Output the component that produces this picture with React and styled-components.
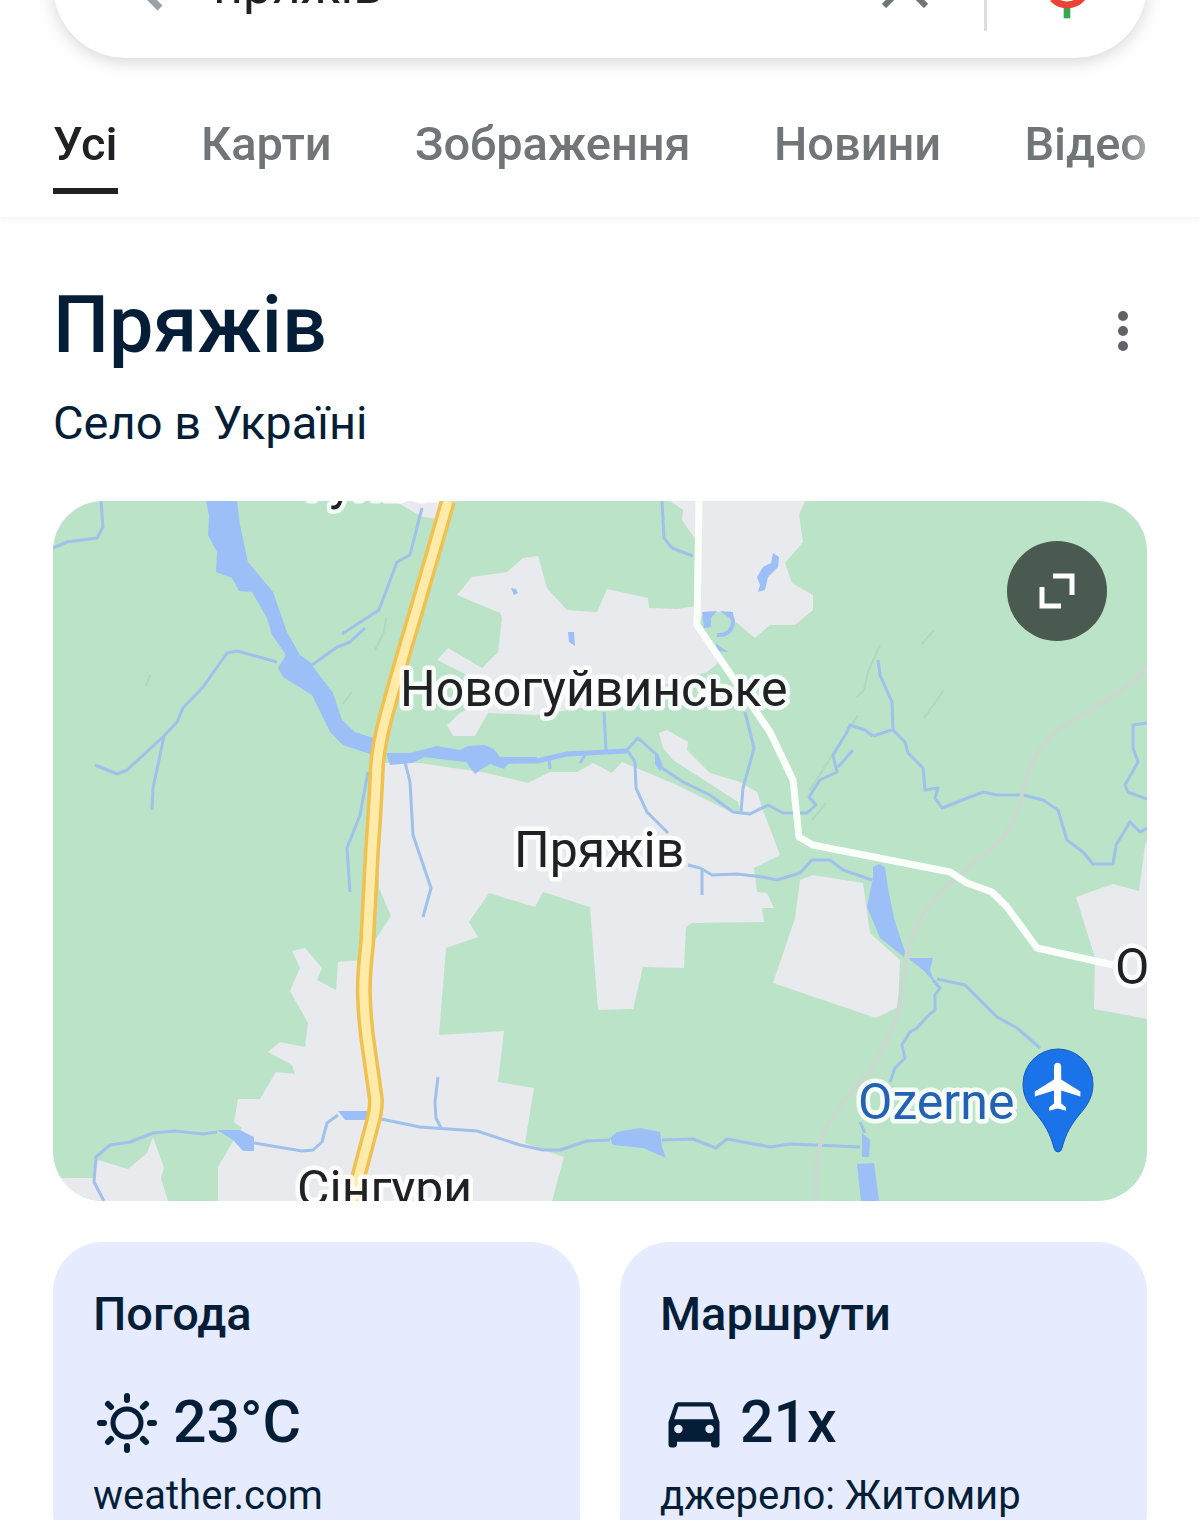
import React, { useState } from "react";
import styled, { createGlobalStyle } from "styled-components";

const tabs = ["Усі", "Карти", "Зображення", "Новини", "Відео"];

function BackIcon() {
  return (
    <svg width='68' height='68' viewBox='0 0 68 68' fill='none' aria-hidden='true'>
      <path d='M47 11 24 34l23 23' stroke='#9aa0a6' strokeWidth='7' />
    </svg>
  );
}

function ClearIcon() {
  return (
    <svg width='46' height='46' viewBox='0 0 46 46' fill='none' aria-hidden='true'>
      <path d='M2 2l42 42M44 2 2 44' stroke='#70757a' strokeWidth='6' />
    </svg>
  );
}

function MicIcon() {
  return (
    <svg width='80' height='80' viewBox='0 0 24 24' aria-hidden='true'>
      <path
        fill='#4285f4'
        d='M12 15c1.66 0 3-1.31 3-2.97V5.01C15 3.35 13.66 2 12 2S9 3.34 9 5.01v7.02C9 13.69 10.34 15 12 15z'
      />
      <path fill='#34a853' d='M11 18.08h2V22h-2z' />
      <path
        fill='#fbbc04'
        d='M7.05 16.87C5.78 15.54 5 14.04 5 12h2c0 1.45.56 2.42 1.47 3.38v.32l-1.15 1.18z'
      />
      <path
        fill='#ea4335'
        d='M12 16.93a4.97 5.25 0 0 1-3.54-1.55l-1.41 1.49C8.31 18.21 10.07 19 12 19c3.87 0 6.99-2.92 6.99-7H17c0 2.92-2.24 4.93-5 4.93z'
      />
    </svg>
  );
}

function DotsIcon() {
  return (
    <svg width='48' height='100' viewBox='0 0 48 100' fill='#5f6368' aria-hidden='true'>
      <circle cx='24' cy='35' r='5' />
      <circle cx='24' cy='50' r='5' />
      <circle cx='24' cy='65' r='5' />
    </svg>
  );
}

function ExpandIcon() {
  return (
    <svg width='36' height='36' viewBox='0 0 36 36' fill='none' aria-hidden='true'>
      <path d='M14 3h19v19M3 14v19h19' stroke='#fff' strokeWidth='5' />
    </svg>
  );
}

function SunIcon() {
  return (
    <svg width='68' height='68' viewBox='0 0 68 68' fill='none' aria-hidden='true'>
      <g stroke='#041e37' strokeWidth='6' strokeLinecap='round'>
        <circle cx='34' cy='35' r='14' strokeWidth='5' />
        <path d='M34 8v4M34 58v4M7 35h4M57 35h4M15 16l3 3M50 51l3 3M53 16l-3 3M18 51l-3 3' />
      </g>
    </svg>
  );
}

function CarIcon() {
  return (
    <svg width='68' height='68' viewBox='0 0 24 24' fill='#041e37' aria-hidden='true'>
      <path d='M18.92 6.01C18.72 5.42 18.16 5 17.5 5h-11c-.66 0-1.21.42-1.42 1.01L3 12v8c0 .55.45 1 1 1h1c.55 0 1-.45 1-1v-1h12v1c0 .55.45 1 1 1h1c.55 0 1-.45 1-1v-8l-2.08-5.99zM6.5 16c-.83 0-1.5-.67-1.5-1.5S5.67 13 6.5 13s1.5.67 1.5 1.5S7.33 16 6.5 16zm11 0c-.83 0-1.5-.67-1.5-1.5s.67-1.5 1.5-1.5 1.5.67 1.5 1.5-.67 1.5-1.5 1.5zM5 11l1.5-4.5h11L19 11H5z' />
    </svg>
  );
}

const land = [
  "395,501 445,501 437,519 423,517 410,510",
  "538,556 547,588 567,610 597,612 607,589 648,598 649,608 677,609 696,606 700,628 718,663 707,672 600,705 537,715 488,713 475,736 453,736 447,725 460,713 477,705 477,680 437,660 448,648 482,668 498,652 502,618 500,613 457,595 472,577 507,572 523,558",
  "670,501 683,510 682,520 696,540 696,625 705,612 723,612 737,623 755,638 770,625 795,625 813,610 813,595 792,583 785,563 803,542 799,515 805,501",
  "378,763 420,763 487,773 528,783 550,772 577,772 593,763 612,773 622,762 677,785 733,813 763,810 780,855 754,868 757,892 767,893 774,908 762,908 764,922 692,923 686,927 684,968 643,967 633,1009 598,1010 590,907 543,892 535,907 489,893 469,922 478,937 446,948 439,1035 504,1031 498,1082 534,1088 525,1143 564,1157 552,1201 218,1201 218,1167 232,1143 242,1128 234,1122 238,1099 260,1099 276,1072 295,1074 292,1065 268,1052 280,1042 305,1047 308,1023 290,991 300,968 292,951 305,948 322,968 317,980 336,990 338,962 362,960 375,940 391,916 379,888",
  "659,733 667,730 688,742 687,750 710,773 740,782 757,792 763,810 741,812 738,802 673,760 663,748",
  "800,880 813,875 863,883 870,933 900,960 898,1007 876,1018 773,983 795,918",
  "1076,897 1113,884 1139,891 1145,845 1147,840 1147,1019 1094,1009 1095,958",
  "53,1178 94,1178 98,1160 128,1169 147,1153 153,1137 164,1168 161,1178 168,1201 53,1201",
];

const water = [
  "206,501 209,515 208,535 217,552 216,572 232,578 239,591 252,592 267,618 272,635 286,655 278,668 283,677 312,695 330,732 343,745 370,754 385,760 373,738 355,732 342,720 333,693 317,672 310,662 300,655 287,632 273,592 248,562 240,525 237,501",
  "386,753 410,753 437,746 448,748 460,750 468,746 485,745 494,749 500,757 537,757 537,762 508,764 504,769 490,764 482,769 475,774 466,762 448,760 425,757 412,763 390,765",
  "773,553 779,557 778,567 768,577 765,590 758,592 760,585 757,577 763,567 771,563",
  "511,588 516,589 518,593 514,595",
  "568,632 574,632 575,646 569,642",
  "702,612 717,611 711,618 711,627 704,628",
  "720,611 733,612 734,622 728,617",
  "715,643 728,652 718,651",
  "655,752 660,762 661,772 655,764",
  "873,867 879,864 885,867 888,888 894,918 905,952 904,957 880,938 867,907 873,878",
  "908,958 933,958 930,970 935,983 923,970",
  "862,1133 870,1140 869,1157 862,1157",
  "857,1164 874,1163 879,1201 861,1201",
  "217,1130 240,1130 254,1137 254,1151 243,1151 233,1140",
  "338,1111 370,1111 368,1120 345,1120",
  "610,1138 617,1132 640,1128 660,1132 662,1147 666,1158 643,1148 613,1145",
];

const streams = [
  "101,501 103,527 97,538 67,542 53,548",
  "422,508 410,555 397,562 379,610 342,634",
  "365,628 350,642 337,647 312,665",
  "277,662 237,651 227,653 203,687 183,708 177,722 164,736 127,770 117,774 95,765",
  "164,736 153,788 152,810",
  "368,772 360,815 347,848 350,892",
  "405,762 410,782 413,835 431,888 423,917",
  "662,501 664,538 672,548 693,556",
  "604,712 606,750",
  "549,757 550,769",
  "587,752 580,763",
  "627,750 635,762 636,788 647,812 668,833",
  "745,712 754,748 743,788 741,812",
  "627,750 638,738 657,755 662,768 683,782 710,795 733,812 750,814 768,805 783,813 807,813 816,805 809,797 820,780 837,772 833,755 847,732 850,725 865,730 873,736",
  "873,736 892,730",
  "838,767 853,750",
  "878,660 880,675 892,702 893,730 905,742 908,753 923,768 925,790 938,788 935,798 942,808 983,792 997,795 1023,795 1043,800 1058,810 1067,840 1083,852 1093,864 1113,864 1116,845 1130,822 1140,832 1147,828",
  "1147,723 1133,725 1133,748 1138,762 1125,785 1128,792 1147,799",
  "688,865 700,868 712,875 737,874 763,877 777,880 800,873 812,860 830,860 843,870 872,880",
  "702,868 702,895",
  "933,980 940,988 935,995 935,1010 930,1014 924,1020 917,1028 910,1032 902,1045 905,1058 895,1068 890,1082",
  "937,979 965,985 997,1017 1017,1028 1040,1048",
  "860,1122 865,1133",
  "438,1077 435,1102 436,1118 441,1128",
  "104,1201 94,1182 96,1157 110,1145 130,1142 153,1133 175,1131 203,1134 217,1132",
  "254,1143 302,1151 313,1150 322,1142 327,1123 338,1115",
  "376,1118 420,1127 477,1131 520,1145 543,1150 560,1150 587,1141 610,1140",
  "662,1140 693,1139 716,1148 727,1139 770,1147 790,1144 860,1147",
];

const ridges = [
  "386,618 384,632 375,650",
  "150,675 146,686",
  "352,692 343,704",
  "880,645 868,672 864,690 856,698",
  "934,630 922,644",
  "944,690 924,718",
  "858,715 810,790",
  "826,803 812,820",
];

const highway =
  "M448 501 416 612Q400 665 390 702 379 740 377 765 375 810 372 850L367 945Q363 980 364 998 365 1025 369 1050L376 1100Q376 1112 372 1125L352 1201";
const road =
  "M699 501 697 625 770 732 793 780 799 837 813 845 950 872 967 883 992 892 1007 907 1037 948 1113 965";
const railway =
  "M1147 668Q1130 688 1077 718 1045 735 1033 762 1024 780 1020 805 1012 832 987 853 957 875 935 898 912 925 907 958L898 1012Q890 1040 870 1072 838 1105 823 1135 813 1165 817 1201";

function TownMap() {
  return (
    <MapSvg viewBox='53 501 1094 700' role='img' aria-label='Пряжів'>
      <rect x='53' y='501' width='1094' height='700' fill='#bbe3c8' />
      <g fill='none' stroke='#b0d8be' strokeWidth='2'>
        {ridges.map((points) => (
          <polyline key={points} points={points} />
        ))}
      </g>
      <g fill='#e8eaed'>
        {land.map((points) => (
          <polygon key={points} points={points} />
        ))}
      </g>
      <g fill='none' stroke='#9fc1ea' strokeWidth='3' strokeLinejoin='round'>
        {streams.map((points) => (
          <polyline key={points} points={points} />
        ))}
      </g>
      <g fill='none' stroke='#9dbff8'>
        <path d='M500 761H537L567 754 627 751' strokeWidth='5' />
        <path d='M728 614Q735 617 732 627 728 636 717 635' strokeWidth='4' />
      </g>
      <g fill='#9dbff8'>
        {water.map((points) => (
          <polygon key={points} points={points} />
        ))}
      </g>
      <g fill='none' strokeLinejoin='round'>
        <path d={railway} stroke='#cbd8cf' strokeWidth='4' />
        <path d={road} stroke='#fafffa' strokeWidth='7' />
        <path d={highway} stroke='#f0c050' strokeWidth='16' />
        <path d={highway} stroke='#feeba9' strokeWidth='9' />
      </g>
      <MapLabel x='305' y='499'>Гуйва</MapLabel>
      <MapLabel x='400' y='706'>Новогуйвинське</MapLabel>
      <MapLabel x='514' y='867'>Пряжів</MapLabel>
      <MapLabel x='297' y='1206'>Сінгури</MapLabel>
      <MapLabel x='1115' y='984'>О</MapLabel>
      <MapLabel x='858' y='1119' $airport>
        Ozerne
      </MapLabel>
      <path
        d='M1058 1152q-3 0-4-4c-4-15-9-23-17-33-8-9-14-18-14-31a35 35 0 0 1 70 0c0 13-6 22-14 31-8 10-13 18-17 33q-1 4-4 4z'
        fill='#1a73e8'
        stroke='#185abc'
        strokeWidth='1'
      />
      <path
        transform='translate(1030 1058) scale(2.4)'
        fill='#fff'
        d='M21 16v-2l-8-5V3.5c0-.83-.67-1.5-1.5-1.5S10 2.67 10 3.5V9l-8 5v2l8-2.5V19l-2 1.5V22l3.5-1 3.5 1v-1.5L13 19v-5.5l8 2.5z'
      />
    </MapSvg>
  );
}

export default function App() {
  const [query, setQuery] = useState("пряжів");

  return (
    <>
      <GlobalStyle />
      <Header>
        <SearchBar>
          <IconButton aria-label='Назад'>
            <BackIcon />
          </IconButton>
          <SearchInput
            aria-label='Пошук'
            value={query}
            onChange={(e) => setQuery(e.target.value)}
          />
          <IconButton aria-label='Очистити' onClick={() => setQuery("")}>
            <ClearIcon />
          </IconButton>
          <Divider />
          <IconButton aria-label='Голосовий пошук'>
            <MicIcon />
          </IconButton>
        </SearchBar>
        <Tabs>
          {tabs.map((tab, i) => (
            <Tab key={tab} href='#' $active={i === 0}>
              {tab}
            </Tab>
          ))}
        </Tabs>
      </Header>
      <Main>
        <TitleRow>
          <Title>Пряжів</Title>
          <IconButton aria-label='Більше'>
            <DotsIcon />
          </IconButton>
        </TitleRow>
        <Subtitle>Село в Україні</Subtitle>
        <MapBox>
          <TownMap />
          <ExpandButton aria-label='Розгорнути карту'>
            <ExpandIcon />
          </ExpandButton>
        </MapBox>
        <Cards>
          <Card href='#'>
            <CardTitle>Погода</CardTitle>
            <CardValue>
              <SunIcon />
              23°C
            </CardValue>
            <CardNote>weather.com</CardNote>
          </Card>
          <Card href='#'>
            <CardTitle>Маршрути</CardTitle>
            <CardValue>
              <CarIcon />
              21х
            </CardValue>
            <CardNote>джерело: Житомир</CardNote>
          </Card>
        </Cards>
      </Main>
    </>
  );
}

const GlobalStyle = createGlobalStyle`
  * {
    box-sizing: border-box;
  }
  body {
    margin: 0;
    background: #fff;
    color: #041e37;
    font-family: Roboto, "Noto Sans", sans-serif;
    overflow-x: hidden;
  }
`;
const Header = styled.header`
  padding: 0 53px;
  box-shadow: 0 2px 6px rgba(0, 0, 0, 0.06);
`;
const SearchBar = styled.div`
  display: flex;
  align-items: center;
  height: 146px;
  margin-top: -88px;
  padding: 0 40px 0 60px;
  border-radius: 73px;
  background: #fff;
  box-shadow: 0 4px 18px rgba(0, 0, 0, 0.16);
`;
const IconButton = styled.button`
  display: flex;
  flex: none;
  padding: 0;
  border: 0;
  background: none;
`;
const SearchInput = styled.input`
  flex: 1;
  min-width: 0;
  margin: 0 32px;
  padding: 0;
  border: 0;
  outline: 0;
  background: none;
  color: #202124;
  font: 400 52px Roboto, sans-serif;
`;
const Divider = styled.div`
  width: 3px;
  height: 92px;
  margin: 0 40px 0 56px;
  background: #dadce0;
`;
const Tabs = styled.nav`
  display: flex;
  justify-content: space-between;
  padding-top: 56px;
  mask-image: linear-gradient(to left, rgba(0, 0, 0, 0.6), #000 28px);
`;
const Tab = styled.a`
  height: 80px;
  margin-bottom: 23px;
  border-bottom: 6px solid ${(props) => (props.$active ? "#202124" : "transparent")};
  color: ${(props) => (props.$active ? "#202124" : "#70757a")};
  font-size: 47px;
  line-height: 60px;
  font-weight: 500;
  text-decoration: none;
`;
const Main = styled.main`
  padding: 64px 53px 0;
`;
const TitleRow = styled.div`
  display: flex;
  align-items: flex-start;
  justify-content: space-between;
`;
const Title = styled.h1`
  margin: 0;
  font-size: 79px;
  line-height: 88px;
  font-weight: 500;
`;
const Subtitle = styled.p`
  margin: 12px 0 48px;
  font-size: 47px;
  line-height: 60px;
`;
const MapBox = styled.section`
  position: relative;
  overflow: hidden;
  border-radius: 50px;
`;
const MapSvg = styled.svg`
  display: block;
  width: 100%;
`;
const MapLabel = styled.text`
  fill: ${(props) => (props.$airport ? "#2463b4" : "#202124")};
  stroke: #fff;
  stroke-width: 9px;
  stroke-opacity: 0.85;
  stroke-linejoin: round;
  paint-order: stroke;
  font-size: 50px;
`;
const ExpandButton = styled.button`
  position: absolute;
  top: 40px;
  right: 40px;
  display: flex;
  align-items: center;
  justify-content: center;
  width: 100px;
  height: 100px;
  border: 0;
  border-radius: 50%;
  background: #4a5a50;
`;
const Cards = styled.div`
  display: grid;
  grid-template-columns: 1fr 1fr;
  gap: 40px;
  margin-top: 41px;
`;
const Card = styled.a`
  padding: 42px 40px;
  border-radius: 50px;
  background: #e6ebfe;
  color: #041e37;
  text-decoration: none;
`;
const CardTitle = styled.h2`
  margin: 0;
  font-size: 47px;
  line-height: 60px;
  font-weight: 500;
`;
const CardValue = styled.div`
  display: flex;
  align-items: center;
  gap: 12px;
  margin-top: 42px;
  font-size: 59px;
  line-height: 72px;
  font-weight: 500;
`;
const CardNote = styled.div`
  margin-top: 12px;
  font-size: 40px;
  line-height: 52px;
`;
